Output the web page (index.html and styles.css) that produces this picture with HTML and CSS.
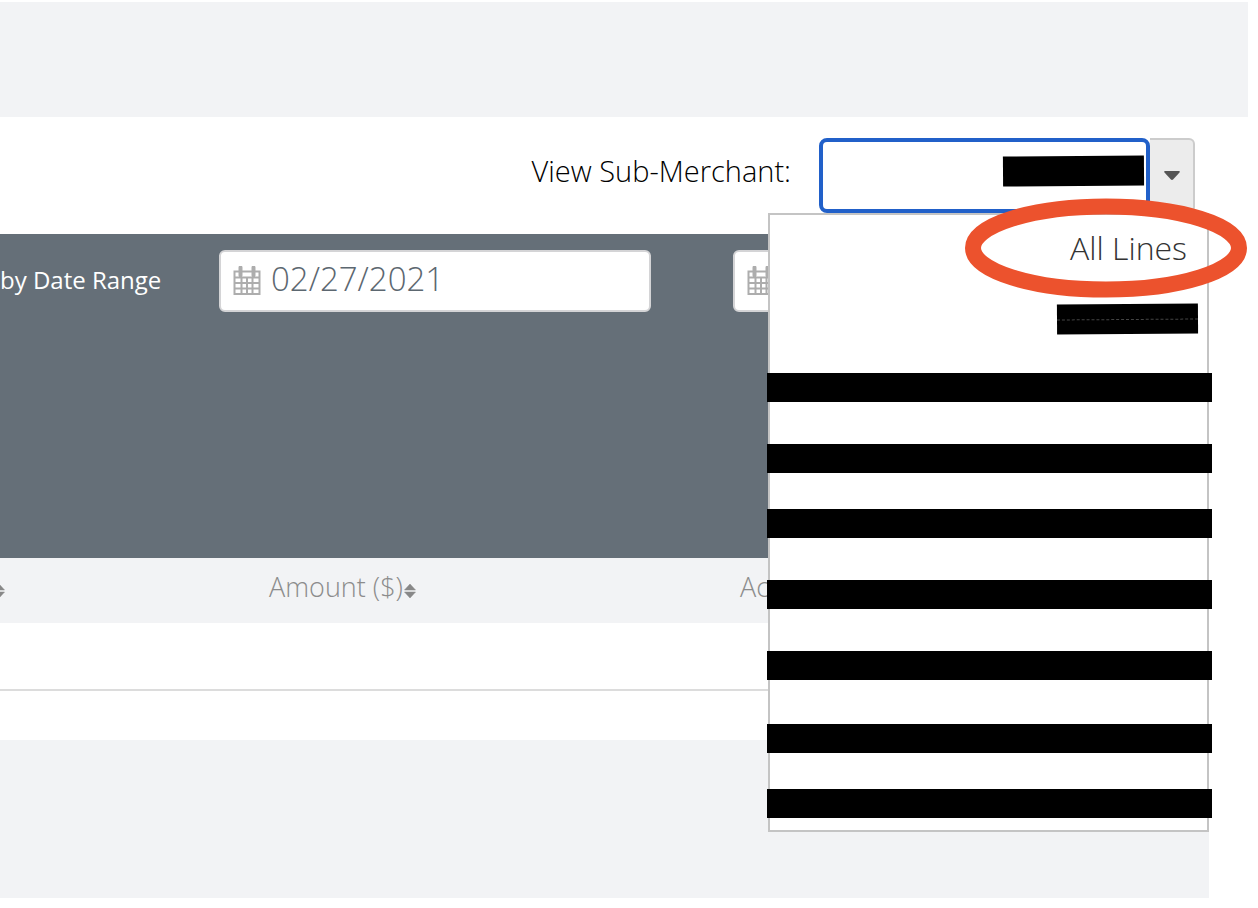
FILE: index.html
```
<!DOCTYPE html>
<html lang="en">
<head>
  <meta charset="UTF-8" />
  <title>Transactions</title>
  <link rel="stylesheet" href="styles.css">
</head>
<body>
  <header class="banner"></header>

  <main class="content">
    <div class="toolbar">
      <label for="merchant">View Sub-Merchant:</label>
      <div class="combo">
        <input type="text" id="merchant" class="combo-input">
        <span class="mask mask-value"></span>
        <button type="button" class="combo-toggle" aria-label="Show merchants">
          <svg width="16" height="10" viewBox="0 0 16 10"><path d="M1 0h14q1.500 .5 .3 1.800L9.300 8.300q-1.300 1.200-2.600 0L.7 1.800Q-.5 .5 1 0z" fill="#555"/></svg>
        </button>
        <ul class="menu">
          <li class="option"><a href="#">All Lines</a></li>
          <li class="option option-masked"><span class="mask"></span></li>
          <li class="bar"></li>
          <li class="bar"></li>
          <li class="bar tight"></li>
          <li class="bar"></li>
          <li class="bar"></li>
          <li class="bar wide"></li>
          <li class="bar tight"></li>
        </ul>
        <svg class="highlight" width="282" height="100" viewBox="0 0 282 100">
          <ellipse cx="141" cy="50" rx="133" ry="41.5" fill="none" stroke="#ec522d" stroke-width="16"/>
        </svg>
      </div>
    </div>

    <form class="filters">
      <label class="filters-label" for="from">by Date Range</label>
      <div class="date-field">
        <svg class="calendar" width="28" height="30" viewBox="0 0 28 30">
          <path d="M1.500 5.500h25v22.500h-25zM1.500 11.500h25M1.500 17h25M1.500 22.500h25M8.500 11v17M14 11v17M19.500 11v17" fill="none" stroke="#adadad" stroke-width="2"/>
          <path d="M7.500 1.500v8M20.500 1.500v8" stroke="#adadad" stroke-width="4" stroke-linecap="round"/>
        </svg>
        <input type="text" id="from" value="02/27/2021">
      </div>
      <div class="date-field">
        <svg class="calendar" width="28" height="30" viewBox="0 0 28 30">
          <path d="M1.500 5.500h25v22.500h-25zM1.500 11.500h25M1.500 17h25M1.500 22.500h25M8.500 11v17M14 11v17M19.500 11v17" fill="none" stroke="#adadad" stroke-width="2"/>
          <path d="M7.500 1.500v8M20.500 1.500v8" stroke="#adadad" stroke-width="4" stroke-linecap="round"/>
        </svg>
        <input type="text" id="to" aria-label="End date">
      </div>
    </form>

    <table class="results">
      <thead>
        <tr>
          <th class="col-first"><button type="button" aria-label="Sort"><svg width="5" height="14" viewBox="7 0 5 14"><path d="M6 0l5.500 6H.5zM6 14l5.500-6H.5z" fill="#888" stroke="#888" stroke-linejoin="round" stroke-width=".5"/></svg></button></th>
          <th class="col-amount"><button type="button">Amount ($)<svg width="12" height="14" viewBox="0 0 12 14"><path d="M6 0l5.500 6H.5zM6 14l5.500-6H.5z" fill="#888" stroke="#888" stroke-linejoin="round" stroke-width=".5"/></svg></button></th>
          <th><button type="button">Ac</button></th>
        </tr>
      </thead>
      <tbody>
        <tr>
          <td colspan="3"></td>
        </tr>
      </tbody>
    </table>
    <div class="page-end"></div>
  </main>
</body>
</html>
```
FILE: styles.css
```
* {
  box-sizing: border-box;
}
body {
  font-family: 'Open Sans', sans-serif;
  font-weight: 300;
  margin: 0;
  padding: 2px 10px 10px 0;
  background-color: #fff;
  color: #000;
}
input, button {
  font: inherit;
  color: inherit;
}
.banner {
  height: 115px;
  background-color: #f2f3f5;
}
.content {
  margin-right: 39px;
}
.toolbar {
  display: flex;
  justify-content: flex-end;
  align-items: flex-start;
  gap: 28px;
  height: 117px;
  padding: 21px 14px 0 0;
  font-size: 29px;
  line-height: 66px;
}
.combo {
  position: relative;
  display: flex;
  height: 75px;
}
.combo-input {
  width: 331px;
  border: 4px solid #2160c9;
  border-radius: 8px;
  outline: none;
  text-align: right;
}
.combo-toggle {
  display: flex;
  justify-content: center;
  align-items: center;
  width: 45px;
  padding: 0;
  border: 2px solid #ccc;
  border-left: none;
  border-radius: 0 6px 6px 0;
  background-color: #ececec;
}
.mask {
  width: 141px;
  height: 30px;
  background-color: #000;
  transform: rotate(-0.4deg);
}
.mask-value {
  position: absolute;
  top: 18px;
  right: 51px;
}
.menu {
  position: absolute;
  top: 75px;
  right: -14px;
  z-index: 1;
  width: 441px;
  height: 619px;
  margin: 0;
  padding: 0;
  border: 2px solid #c4c4c4;
  background-color: #fff;
  list-style: none;
}
.option {
  display: flex;
  justify-content: flex-end;
  align-items: center;
  height: 66px;
  padding-right: 20px;
  font-size: 32px;
}
.option a {
  color: #333;
  text-decoration: none;
}
.option-masked {
  height: 76px;
  padding-right: 9px;
}
.option-masked .mask {
  padding-top: 15px;
}
.option-masked .mask::after {
  content: '';
  display: block;
  border-top: 1px dashed #444;
}
.bar {
  height: 29px;
  margin: 42px -5px 0 -3px;
  background-color: #000;
}
.option-masked + .bar {
  margin-top: 16px;
}
.bar.tight {
  margin-top: 36px;
}
.bar.wide {
  margin-top: 44px;
}
.highlight {
  position: absolute;
  top: 60px;
  right: -52px;
  z-index: 2;
  pointer-events: none;
}
.filters {
  display: flex;
  align-items: flex-start;
  gap: 82px;
  height: 324px;
  padding-top: 16px;
  background-color: #656f78;
}
.filters-label {
  width: 137px;
  color: #fff;
  font-size: 24px;
  font-weight: 400;
  line-height: 60px;
  white-space: nowrap;
}
.date-field {
  display: flex;
  align-items: center;
  flex: 0 0 432px;
  gap: 10px;
  min-width: 0;
  height: 62px;
  padding: 0 12px;
  border: 2px solid #d4d4d6;
  border-radius: 6px;
  background-color: #fff;
}
/* the label keeps its text width, the fields keep theirs */
.filters-label {
  flex: none;
}
.calendar {
  flex: none;
}
.date-field input {
  flex: 1;
  min-width: 0;
  padding: 0 0 6px;
  border: none;
  outline: none;
  color: #5c6770;
  font-size: 33px;
}
.results {
  width: 100%;
  border-collapse: collapse;
  table-layout: fixed;
}
.results th {
  height: 65px;
  padding: 0;
  background-color: #f2f3f5;
  text-align: left;
  font-weight: 300;
}
.results th button {
  display: flex;
  align-items: center;
  gap: 1px;
  padding: 0 0 8px;
  border: none;
  background: none;
  color: #8c8c8c;
  font-size: 27px;
  line-height: 38px;
}
.results th svg {
  margin-top: 8px;
}
.col-first {
  width: 269px;
}
.col-amount {
  width: 471px;
}
.results td {
  height: 67px;
  border-bottom: 2px solid #dcdcdc;
}
.page-end {
  height: 158px;
  margin-top: 49px;
  background-color: #f2f3f5;
}
```
